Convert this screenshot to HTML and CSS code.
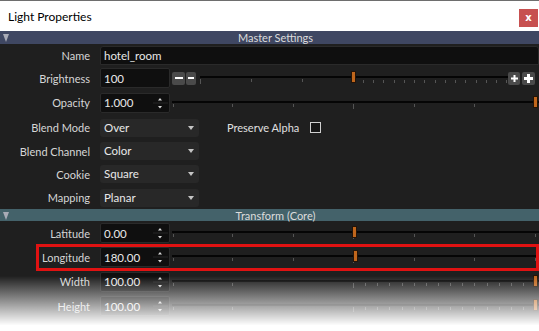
FILE: index.html
```html
<!DOCTYPE html>
<html>
<head>
<meta name="viewport" content="width=device-width, initial-scale=1">
<link rel="stylesheet" href="styles.css">
</head>
<body>

<div class="window">
  <div class="titlebar">
    <span class="title">Light Properties</span>
    <span class="close">x</span>
  </div>

  <div class="section master"><span class="caret"></span><span class="section-name">Master Settings</span></div>

  <div class="row name-row">
    <span class="label">Name</span>
    <div class="field wide">hotel_room</div>
  </div>

  <div class="row">
    <span class="label">Brightness</span>
    <div class="field short">100</div>
    <span class="btn big-minus"><svg width="8" height="2"><rect width="8" height="2" fill="#fff"/></svg></span>
    <span class="btn small-minus"><svg width="6" height="2"><rect width="6" height="2" fill="#fff"/></svg></span>
    <svg class="slider bright" width="308" height="20">
      <rect x="0" y="8" width="308" height="2" fill="#050505"/>
      <path d="M0.5 11v5M51.5 11v3M102.5 11v3M163.5 12v3M173.5 12v3M183.5 12v3M194.5 12v3M204.5 12v3M214.5 12v3M224.5 12v3M235.5 12v3M245.5 12v3M255.5 12v3M265.5 12v3M276.5 12v3M286.5 12v3M296.5 12v3M306.5 12v3" stroke="#555"/>
      <rect x="151.5" y="3.5" width="4" height="11" fill="#c0661c" stroke="#241408"/>
    </svg>
    <span class="btn small-plus"><svg width="7" height="7"><path d="M0 2.5h7v2H0zM2.5 0h2v7h-2z" fill="#fff"/></svg></span>
    <span class="btn big-plus"><svg width="9" height="9"><path d="M0 3h9v3H0zM3 0h3v9H3z" fill="#fff"/></svg></span>
  </div>

  <div class="row wide-gap">
    <span class="label">Opacity</span>
    <div class="field spin"><span class="value">1.000</span><span class="arrows"><svg width="17" height="18"><path d="M6 6.5h4l-2-2.5z M6 12h4l-2 2.5z" fill="#d8d8d8"/><rect x="1" y="8.5" width="15" height="1" fill="#262626"/></svg></span></div>
    <svg class="slider" width="367" height="20">
      <rect x="0" y="8" width="367" height="2" fill="#050505"/>
      <path d="M1.5 11v3M60.5 11v3M121.5 11v3M181.5 11v5M242.5 11v3M302.5 11v3" stroke="#555"/>
      <rect x="361.5" y="3.5" width="4" height="11" fill="#c0661c" stroke="#241408"/>
    </svg>
  </div>

  <div class="row wide-gap">
    <span class="label">Blend Mode</span>
    <div class="dropdown">Over<span class="drop-arrow"></span></div>
    <span class="check-label">Preserve Alpha</span>
    <span class="checkbox"></span>
  </div>

  <div class="row narrow">
    <span class="label">Blend Channel</span>
    <div class="dropdown">Color<span class="drop-arrow"></span></div>
  </div>

  <div class="row">
    <span class="label">Cookie</span>
    <div class="dropdown">Square<span class="drop-arrow"></span></div>
  </div>

  <div class="row last">
    <span class="label">Mapping</span>
    <div class="dropdown">Planar<span class="drop-arrow"></span></div>
  </div>

  <div class="section transform"><span class="caret"></span><span class="section-name">Transform (Core)</span></div>

  <div class="row">
    <span class="label">Latitude</span>
    <div class="field spin"><span class="value">0.00</span><span class="arrows"><svg width="17" height="18"><path d="M6 6.5h4l-2-2.5z M6 12h4l-2 2.5z" fill="#d8d8d8"/><rect x="1" y="8.5" width="15" height="1" fill="#262626"/></svg></span></div>
    <svg class="slider" width="367" height="20">
      <rect x="0" y="8" width="367" height="2" fill="#050505"/>
      <path d="M1.5 11v3M60.5 11v3M121.5 11v3M181.5 11v5M242.5 11v3M302.5 11v3M363.5 11v3" stroke="#555"/>
      <rect x="180.5" y="3.5" width="4" height="11" fill="#c0661c" stroke="#241408"/>
    </svg>
  </div>

  <div class="row highlight">
    <span class="label">Longitude</span>
    <div class="field spin"><span class="value">180.00</span><span class="arrows"><svg width="17" height="18"><path d="M6 6.5h4l-2-2.5z M6 12h4l-2 2.5z" fill="#d8d8d8"/><rect x="1" y="8.5" width="15" height="1" fill="#262626"/></svg></span></div>
    <svg class="slider" width="367" height="20">
      <rect x="0" y="8" width="367" height="2" fill="#050505"/>
      <path d="M1.5 11v3M60.5 11v3M121.5 11v3M181.5 11v5M242.5 11v3M302.5 11v3M363.5 11v3" stroke="#555"/>
      <rect x="181.5" y="3.5" width="4" height="11" fill="#c0661c" stroke="#241408"/>
    </svg>
  </div>

  <div class="row wide-gap">
    <span class="label">Width</span>
    <div class="field spin"><span class="value">100.00</span><span class="arrows"><svg width="17" height="18"><path d="M6 6.5h4l-2-2.5z M6 12h4l-2 2.5z" fill="#d8d8d8"/><rect x="1" y="8.5" width="15" height="1" fill="#262626"/></svg></span></div>
    <svg class="slider" width="367" height="20">
      <rect x="0" y="8" width="367" height="2" fill="#050505"/>
      <path d="M1.5 11v3M60.5 11v3M181.5 11v5M193.5 11v3M205.5 11v3M217.5 11v3M230.5 11v3M242.5 11v3M254.5 11v3M266.5 11v3M278.5 11v3M290.5 11v3M302.5 11v3M315.5 11v3M327.5 11v3M339.5 11v3M351.5 11v3" stroke="#555"/>
      <rect x="361.5" y="3.5" width="4" height="11" fill="#c0661c" stroke="#241408"/>
    </svg>
  </div>

  <div class="row">
    <span class="label">Height</span>
    <div class="field spin"><span class="value">100.00</span><span class="arrows"><svg width="17" height="18"><path d="M6 6.5h4l-2-2.5z M6 12h4l-2 2.5z" fill="#d8d8d8"/><rect x="1" y="8.5" width="15" height="1" fill="#262626"/></svg></span></div>
    <svg class="slider" width="367" height="20">
      <rect x="0" y="8" width="367" height="2" fill="#050505"/>
      <path d="M1.5 11v3M60.5 11v3M181.5 11v5M193.5 11v3M205.5 11v3M217.5 11v3M230.5 11v3M242.5 11v3M254.5 11v3M266.5 11v3M278.5 11v3M290.5 11v3M302.5 11v3M315.5 11v3M327.5 11v3M339.5 11v3M351.5 11v3" stroke="#555"/>
      <rect x="361.5" y="3.5" width="4" height="11" fill="#c0661c" stroke="#241408"/>
    </svg>
  </div>

  <div class="fade"></div>
</div>

</body>
</html>
```

FILE: styles.css
```css
* {
  box-sizing: border-box;
}

body {
  margin: 0;
  background: #fff;
  font-family: Lato, "Liberation Sans", sans-serif;
}

.window {
  position: relative;
  width: 539px;
  height: 331px;
  overflow: hidden;
  background: #1f1f1f;
}

.titlebar {
  display: flex;
  align-items: center;
  height: 31px;
  padding: 0 1px 0 8px;
  background: #fff;
  border-top: 1px solid #6e6e6e;
}

.title {
  flex: 1;
  font-size: 12px;
  color: #000;
}

.close {
  width: 19px;
  height: 18px;
  margin-top: 4px;
  background: #c75050;
  color: #fff;
  font-family: "DejaVu Sans", sans-serif;
  font-size: 10px;
  font-weight: bold;
  line-height: 17px;
  text-align: center;
}

.section {
  display: flex;
  align-items: center;
  height: 13px;
  font-size: 11px;
  color: #dcdcdc;
}

.section.master {
  background: #3f4762;
}

.section.transform {
  height: 12px;
  background: #44626a;
}

.caret {
  width: 0;
  height: 0;
  margin: 1px 3px 0 3px;
  border-left: 3.5px solid transparent;
  border-right: 3.5px solid transparent;
  border-top: 8px solid #a9abb6;
}

.section-name {
  flex: 1;
  text-align: center;
}

.row {
  position: relative;
  display: flex;
  align-items: center;
  height: 24px;
  font-size: 11px;
}

.row.name-row,
.row.narrow {
  height: 22px;
}

.row.wide-gap {
  height: 25px;
}

.row.last {
  height: 23px;
}

.label {
  flex: none;
  width: 90px;
  margin-right: 10px;
  text-align: right;
  color: #d6d6d6;
}

.field {
  display: flex;
  align-items: center;
  height: 20px;
  padding-left: 3px;
  background: #0f0f0f;
  border: 1px solid #2a2a2a;
  border-radius: 2px;
  color: #e8e8e8;
  font-size: 11.5px;
}

.field.wide {
  flex: 1;
  height: 19px;
  border-radius: 3px 3px 0 0;
}

.field.short,
.field.spin {
  flex: none;
  width: 70px;
}

.field.spin .value {
  flex: 1;
}

.arrows {
  display: flex;
  height: 18px;
}

.btn {
  display: flex;
  align-items: center;
  justify-content: center;
  flex: none;
  height: 13px;
  background: #4a4a4a;
  border-radius: 2px;
}

.big-minus {
  width: 13px;
  margin-left: 2px;
  margin-right: 1px;
}

.small-minus {
  width: 10px;
  margin-right: 4px;
}

.small-plus {
  width: 12px;
  margin-right: 2px;
}

.big-plus {
  width: 13px;
}

.slider {
  flex: none;
  display: block;
  margin-left: 2px;
}

.slider.bright {
  margin-left: 0;
}

.dropdown {
  position: relative;
  flex: none;
  width: 99px;
  height: 18px;
  padding-left: 4px;
  background: #282828;
  border-radius: 3px;
  color: #e8e8e8;
  font-size: 11.5px;
  line-height: 18px;
}

.drop-arrow {
  position: absolute;
  right: 5px;
  top: 7px;
  width: 0;
  height: 0;
  border-left: 3.5px solid transparent;
  border-right: 3.5px solid transparent;
  border-top: 4px solid #c4c4c4;
}

.check-label {
  margin-left: 28px;
  color: #e0e0e0;
}

.checkbox {
  width: 11px;
  height: 11px;
  margin-left: 11px;
  background: #161616;
  border: 1px solid #cfcfcf;
}

.highlight::after {
  content: "";
  position: absolute;
  left: 36px;
  right: 0;
  top: -1px;
  bottom: -2px;
  border: 3px solid #e01212;
}

.fade {
  position: absolute;
  left: 0;
  right: 0;
  bottom: 0;
  height: 55px;
  background: linear-gradient(rgba(255, 255, 255, 0), #fff 90%);
}
```
